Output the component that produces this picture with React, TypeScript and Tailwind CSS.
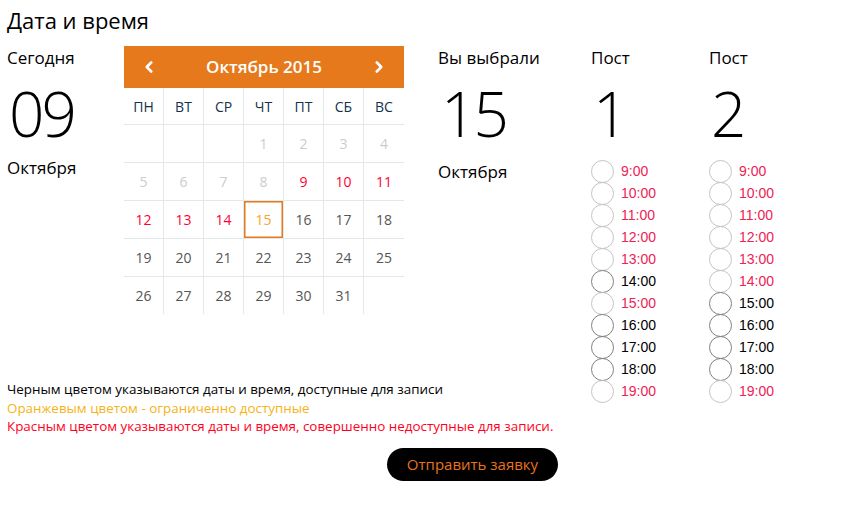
import { ChevronLeft, ChevronRight } from 'lucide-react';

type DayState = 'empty' | 'past' | 'busy' | 'limited' | 'free';

const weekDays = ['ПН', 'ВТ', 'СР', 'ЧТ', 'ПТ', 'СБ', 'ВС'];

// October 2015 starts on Thursday
const buildWeeks = () => {
  const cells: { day: number | null; state: DayState }[] = [];
  for (let i = 0; i < 3; i++) cells.push({ day: null, state: 'empty' });
  for (let d = 1; d <= 31; d++) {
    let state: DayState = 'free';
    if (d <= 8) state = 'past';
    else if (d <= 14) state = 'busy';
    else if (d === 15) state = 'limited';
    cells.push({ day: d, state });
  }
  while (cells.length % 7) cells.push({ day: null, state: 'empty' });
  const weeks = [];
  for (let i = 0; i < cells.length; i += 7) weeks.push(cells.slice(i, i + 7));
  return weeks;
};

const dayColor: Record<DayState, string> = {
  empty: '',
  past: 'text-[#cccccc]',
  busy: 'text-[#ff0033]',
  limited: 'text-[#f5a623] shadow-[inset_0_0_0_1.5px_#e6791b]',
  free: 'text-[#555555]',
};

const hours = ['9:00', '10:00', '11:00', '12:00', '13:00', '14:00', '15:00', '16:00', '17:00', '18:00', '19:00'];

const posts = [
  { num: 1, free: ['14:00', '16:00', '17:00', '18:00'] },
  { num: 2, free: ['15:00', '16:00', '17:00', '18:00'] },
];

const Calendar = () => {
  const weeks = buildWeeks();
  return (
    <div className="w-[280px]">
      <div className="flex h-[42px] items-center justify-between bg-[#e6791b] px-[16px] text-white">
        <ChevronLeft size={18} strokeWidth={3.5} />
        <span className="text-[17px] font-semibold">Октябрь 2015</span>
        <ChevronRight size={18} strokeWidth={3.5} />
      </div>
      <div className="grid grid-cols-7">
        {weekDays.map((w, i) => (
          <div
            key={w}
            className={`flex h-[36px] items-center justify-center text-[14px] text-[#14324d] ${i < 6 ? 'border-r border-[#e3e8ea]' : ''}`}
          >
            {w}
          </div>
        ))}
      </div>
      {weeks.map((week, wi) => (
        <div key={wi} className="grid grid-cols-7">
          {week.map((c, i) => (
            <div
              key={i}
              className={`flex h-[38px] items-center justify-center border-t border-[#e3e8ea] text-[14px] ${i < 6 ? 'border-r' : ''} ${dayColor[c.state]}`}
            >
              {c.day}
            </div>
          ))}
        </div>
      ))}
    </div>
  );
};

const Post = ({ num, free }: { num: number; free: string[] }) => (
  <div className="w-[118px]">
    <div className="text-[17px] leading-[24px]">Пост</div>
    <div className="mt-[12px] h-[78px] pl-[2px] text-[62px] font-light leading-[62px]">{num}</div>
    <div className="flex flex-col">
      {hours.map(h => {
        const ok = free.includes(h);
        return (
          <div key={h} className="flex h-[22px] items-center">
            <span
              className={`h-[23px] w-[23px] shrink-0 rounded-full border ${ok ? 'border-[#808080]' : 'border-[#c4c4c4]'}`}
            />
            <span
              className={`ml-[7px] font-['Liberation_Sans',Arial,sans-serif] text-[14px] ${ok ? 'text-black' : 'text-[#ee2255]'}`}
            >
              {h}
            </span>
          </div>
        );
      })}
    </div>
  </div>
);

export default function App() {
  return (
    <div className="min-h-[522px] bg-white font-['Open_Sans',sans-serif] text-black">
      <h1 className="pl-[7px] pt-[4px] text-[22px] leading-[32px]">Дата и время</h1>

      <div className="mt-[10px] flex">
        <div className="w-[124px] pl-[7px]">
          <div className="text-[17px] leading-[24px]">Сегодня</div>
          <div className="mt-[12px] h-[74px] pl-[2px] text-[62px] font-light leading-[62px] tracking-[-3px]">09</div>
          <div className="text-[17px] leading-[24px]">Октября</div>
        </div>

        <Calendar />

        <div className="ml-[34px] w-[153px]">
          <div className="text-[17px] leading-[24px]">Вы выбрали</div>
          <div className="mt-[12px] h-[78px] pl-[3px] text-[62px] font-light leading-[62px] tracking-[-3px]">15</div>
          <div className="text-[17px] leading-[24px]">Октября</div>
        </div>

        {posts.map(p => (
          <Post key={p.num} num={p.num} free={p.free} />
        ))}
      </div>

      <div className="mt-[-22px] pl-[7px] text-[13.4px] leading-[18.5px]">
        <p className="text-black">Черным цветом указываются даты и время, доступные для записи</p>
        <p className="text-[#f5b316]">Оранжевым цветом - ограниченно доступные</p>
        <p className="text-[#ff0022]">Красным цветом указываются даты и время, совершенно недоступные для записи.</p>
      </div>

      <div className="mt-[12px] pl-[387px]">
        <button className="h-[33px] w-[171px] rounded-full bg-black text-[15px] text-[#e8731c]">
          Отправить заявку
        </button>
      </div>
    </div>
  );
}
